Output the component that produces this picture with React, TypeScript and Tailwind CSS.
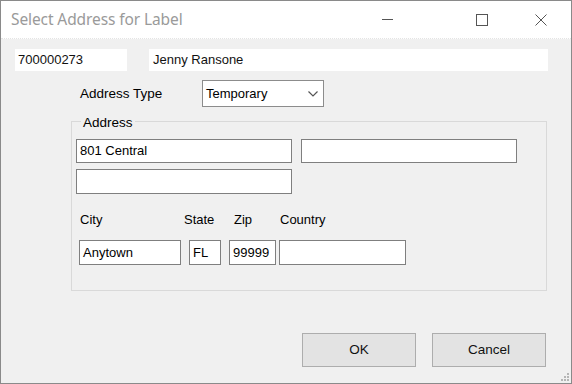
import React from "react";

const field =
  "h-[24px] bg-white border border-[#7f7f7f] pl-[3px] flex items-center text-[13px] text-black";

function TitleBar() {
  return (
    <div className="h-[38px] flex items-center bg-white border-b border-dotted border-[#e4e4e4]">
      <span className="ml-[10px] text-[15.5px] text-[#9a9a9a] font-['Noto_Sans','Open_Sans',sans-serif] tracking-[-0.1px]">
        Select Address for Label
      </span>
      <div className="ml-auto flex items-center h-full">
        {/* minimize */}
        <div className="w-[11px] h-px bg-[#555] mr-[83px]" />
        {/* maximize */}
        <div className="w-[12px] h-[12px] border border-[#555] mr-[47px]" />
        {/* close */}
        <svg width="12" height="12" viewBox="0 0 12 12" className="mr-[24px]">
          <path d="M0.5 0.5 L11.5 11.5 M11.5 0.5 L0.5 11.5" stroke="#555" strokeWidth="1" />
        </svg>
      </div>
    </div>
  );
}

export default function App() {
  return (
    <div className="w-[572px] h-[384px] border border-[#8a8a8a] bg-white flex flex-col font-['Liberation_Sans',Arial,sans-serif] text-black">
      <TitleBar />
      <div className="relative flex-1 bg-[#f0f0f0] flex flex-col">
        {/* patient id / name */}
        <div className="flex mt-[10px]">
          <div className="ml-[14px] w-[112px] h-[22px] bg-white flex items-center pl-[3px] text-[13px] text-[#111]">
            700000273
          </div>
          <div className="ml-[22px] w-[399px] h-[22px] bg-white flex items-center pl-[4px] text-[13px] text-[#111]">
            Jenny Ransone
          </div>
        </div>

        {/* address type */}
        <div className="flex items-center mt-[9px] h-[27px]">
          <span className="ml-[79px] w-[122px] text-[13.5px] pt-[2px]">Address Type</span>
          <div className="w-[122px] h-[27px] bg-white border border-[#8c8c8c] flex items-center pl-[3px] text-[13px]">
            <span>Temporary</span>
            <svg width="10" height="6" viewBox="0 0 10 6" className="ml-auto mr-[5px]">
              <path d="M0.5 0.5 L5 5 L9.5 0.5" fill="none" stroke="#555" strokeWidth="1.2" />
            </svg>
          </div>
        </div>

        {/* address group */}
        <div className="relative ml-[70px] mt-[14px] w-[476px] h-[170px] border border-[#d9d9d9] pt-[17px] pl-[4px]">
          <span className="absolute -top-[7px] left-[9px] px-[2px] bg-[#f0f0f0] text-[13.5px] leading-[16px]">
            Address
          </span>
          <div className="flex">
            <div className={`${field} w-[216px]`}>801 Central</div>
            <div className={`${field} w-[216px] ml-[9px]`} />
          </div>
          <div className={`${field} w-[216px] mt-[6px] h-[25px]`} />

          <div className="flex mt-[18px] h-[16px] text-[13px] leading-[16px]">
            <span className="ml-[4px] w-[104px]">City</span>
            <span className="w-[50px]">State</span>
            <span className="w-[46px]">Zip</span>
            <span>Country</span>
          </div>
          <div className="flex mt-[12px]">
            <div className={`${field} h-[25px] w-[102px] ml-[3px]`}>Anytown</div>
            <div className={`${field} h-[25px] w-[32px] ml-[8px]`}>FL</div>
            <div className={`${field} h-[25px] w-[47px] ml-[8px] pl-[2px]`}>99999</div>
            <div className={`${field} h-[25px] w-[127px] ml-[3px]`} />
          </div>
        </div>

        {/* buttons */}
        <div className="flex mt-[42px] ml-[301px] gap-[16px]">
          <button className="w-[114px] h-[34px] bg-[#e3e3e3] border border-[#adadad] text-[13.5px] text-[#111]">
            OK
          </button>
          <button className="w-[114px] h-[34px] bg-[#e3e3e3] border border-[#adadad] text-[13.5px] text-[#111]">
            Cancel
          </button>
        </div>

        {/* size grip */}
        <div className="absolute right-[2px] bottom-[2px] grid grid-cols-3 gap-[1px] w-[8px] h-[8px]">
          <span />
          <span />
          <span className="w-[2px] h-[2px] bg-[#b5b5b5]" />
          <span />
          <span className="w-[2px] h-[2px] bg-[#b5b5b5]" />
          <span className="w-[2px] h-[2px] bg-[#b5b5b5]" />
          <span className="w-[2px] h-[2px] bg-[#b5b5b5]" />
          <span className="w-[2px] h-[2px] bg-[#b5b5b5]" />
          <span className="w-[2px] h-[2px] bg-[#b5b5b5]" />
        </div>
      </div>
    </div>
  );
}
